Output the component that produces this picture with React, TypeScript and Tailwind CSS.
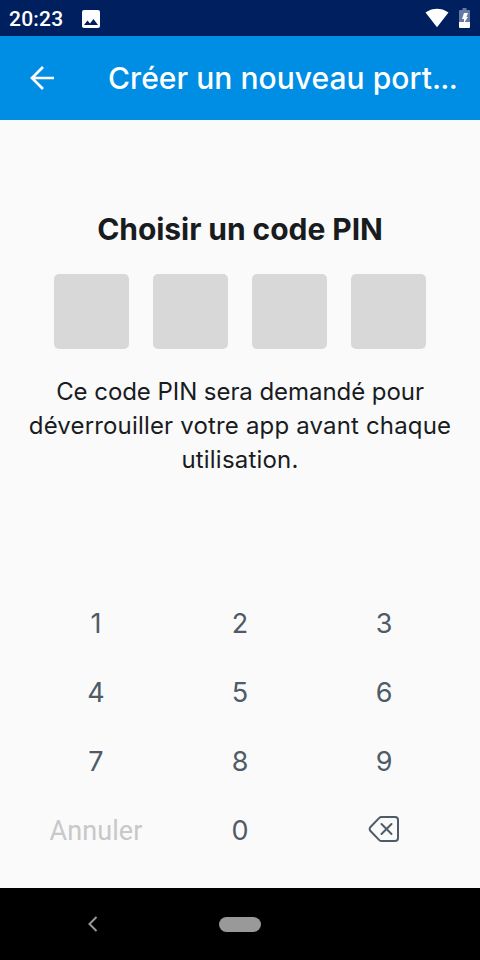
import React from "react";

const keys = ["1", "2", "3", "4", "5", "6", "7", "8", "9"];

export default function App() {
  return (
    <div className="flex h-[960px] w-[480px] flex-col overflow-hidden bg-[#fafafa] font-['Inter',sans-serif] text-[#191c1f]">
      <div className="flex h-9 shrink-0 items-center bg-[#001f5f] pl-[9px] pr-[10px] text-white">
        <span className="w-[54px] pt-px font-['Roboto',sans-serif] text-[21px] font-medium leading-9 tracking-[0.2px]">20:23</span>
        <svg className="ml-[18.500px] mt-px" width="18" height="18" viewBox="0 0 18 18" fill="currentColor">
          <path d="M18 16V2a2 2 0 0 0-2-2H2a2 2 0 0 0-2 2v14c0 1.100.9 2 2 2h14a2 2 0 0 0 2-2zM5.500 10.500 8 13.500 11.500 9l4.500 6H2z" />
        </svg>
        <svg className="ml-auto -mt-px" width="24" height="20" viewBox="0 0 24 20" fill="currentColor">
          <path d="M12 19.200.5 4.600C1.300 4 5.500.7 12 .7s10.700 3.300 11.500 3.900z" />
        </svg>
        <svg className="ml-[10px] -mt-px" width="11" height="20" viewBox="0 0 11 20">
          <path d="M3.500 0h4v2H10a1 1 0 0 1 1 1v11H0V3a1 1 0 0 1 1-1h2.500z" fill="#667aa4" />
          <path d="M0 14h11v5a1 1 0 0 1-1 1H1a1 1 0 0 1-1-1zM5 5h4L7.500 9H9l-4 6v-4H3z" fill="#fff" />
        </svg>
      </div>
      <header className="flex h-[84px] shrink-0 items-center bg-[#008de4] text-white">
        <svg className="ml-[30px]" width="24" height="24" viewBox="0 0 24 24" fill="none" stroke="currentColor" strokeWidth="2.700">
          <path d="M24 12H2M13 1 2 12l11 11" />
        </svg>
        <h1 className="ml-[54px] flex whitespace-nowrap pt-px text-[30px] font-medium">
          <span className="tracking-[0.050px]">Créer un nouveau port</span>
          <span className="tracking-[-0.700px]">...</span>
        </h1>
      </header>
      <main className="flex flex-1 flex-col items-center">
        <h2 className="mt-[87px] text-[30px] font-bold leading-[44px] tracking-[-0.060px]">Choisir un code PIN</h2>
        <div className="mt-[23px] flex gap-6">
          {[0, 1, 2, 3].map((i) => (
            <div key={i} className="size-[75px] rounded-[5px] bg-[#d8d8d8]" />
          ))}
        </div>
        <p className="mt-[26px] flex flex-col items-center whitespace-nowrap text-[24px] leading-[34px]">
          <span className="tracking-[-0.060px]">Ce code PIN sera demandé pour</span>
          <span className="tracking-[0.170px]">déverrouiller votre app avant chaque</span>
          <span className="tracking-[0.200px]">utilisation.</span>
        </p>
        <div className="mt-auto mb-[22px] grid w-[432px] auto-rows-[69px] grid-cols-3 place-items-center text-[27px] text-[#4f5b67]">
          {keys.map((k) => (
            <button key={k}>{k}</button>
          ))}
          <button className="font-['Roboto',sans-serif] tracking-[0.100px] text-[#c8c8c8]">Annuler</button>
          <button>0</button>
          <svg className="-mt-1.5" width="32" height="28" viewBox="0 0 32 28" fill="none" stroke="currentColor" strokeWidth="2" strokeLinejoin="round" strokeLinecap="round">
            <path d="M13.500 2H27a3 3 0 0 1 3 3v18a3 3 0 0 1-3 3H13.500a3 3 0 0 1-2.200-.9L2.500 16a2.800 2.800 0 0 1 0-4l8.800-9.100A3 3 0 0 1 13.500 2zM13.500 9l10 10M23.500 9l-10 10" />
          </svg>
        </div>
      </main>
      <nav className="flex h-[72px] shrink-0 items-center bg-black">
        <svg className="ml-[87px]" width="11" height="16" viewBox="0 0 11 16" fill="none" stroke="#999" strokeWidth="2">
          <path d="m9.500 1-7 7 7 7" />
        </svg>
        <div className="ml-[121px] h-[15px] w-[42px] rounded-full bg-[#999]" />
      </nav>
    </div>
  );
}
